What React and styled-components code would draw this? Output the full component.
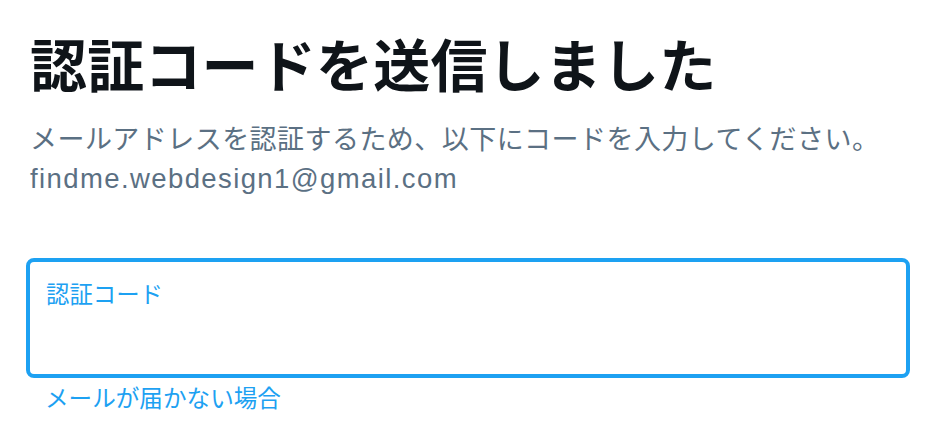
import React from "react";
import styled, { createGlobalStyle } from "styled-components";

const GlobalStyle = createGlobalStyle`
  html, body {
    margin: 0;
    padding: 0;
    background: #ffffff;
  }
  body {
    font-family: "Liberation Sans", "Noto Sans CJK JP", sans-serif;
    -webkit-font-smoothing: antialiased;
  }
`;

const Page = styled.div`
  width: 943px;
  height: 439px;
  box-sizing: border-box;
  padding: 28px 33px 0 26px;
  overflow: hidden;
`;

const Header = styled.div`
  padding: 0 4px;
`;

const Title = styled.h1`
  margin: 0;
  font-family: "Noto Sans CJK JP", sans-serif;
  font-size: 57px;
  font-weight: 700;
  line-height: 68px;
  color: #0f1419;
  letter-spacing: 0.2px;
`;

const Description = styled.p`
  margin: 22px 0 0;
  font-family: "Noto Sans CJK JP", sans-serif;
  font-size: 27px;
  line-height: 39px;
  letter-spacing: 0.45px;
  color: #5b7083;
`;

const Email = styled.span`
  display: block;
  padding-top: 2px;
  font-family: "Liberation Sans", sans-serif;
  font-size: 27.5px;
  letter-spacing: 1.4px;
`;

const Field = styled.label`
  display: block;
  margin-top: 60px;
  height: 120px;
  box-sizing: border-box;
  border: 4px solid #1da1f2;
  border-radius: 8px;
  padding: 17px 17px 0 16px;
`;

const FieldLabel = styled.span`
  display: block;
  font-family: "Noto Sans CJK JP", sans-serif;
  font-size: 23.4px;
  line-height: 28px;
  color: #1da1f2;
`;

const Input = styled.input`
  display: block;
  width: 100%;
  border: none;
  outline: none;
  background: transparent;
  padding: 0;
  margin-top: 8px;
  font-family: "Liberation Sans", "Noto Sans CJK JP", sans-serif;
  font-size: 30px;
  color: #0f1419;
`;

const HelpLink = styled.a`
  display: inline-block;
  margin: 5px 0 0 19px;
  font-family: "Noto Sans CJK JP", sans-serif;
  font-size: 23.6px;
  line-height: 28px;
  color: #1da1f2;
  text-decoration: none;
  cursor: pointer;
`;

export default function App() {
  return (
    <>
      <GlobalStyle />
      <Page>
        <Header>
          <Title>認証コードを送信しました</Title>
          <Description>
            メールアドレスを認証するため、以下にコードを入力してください。
            <Email>findme.webdesign1@gmail.com</Email>
          </Description>
        </Header>
        <Field>
          <FieldLabel>認証コード</FieldLabel>
          <Input type="text" />
        </Field>
        <HelpLink>メールが届かない場合</HelpLink>
      </Page>
    </>
  );
}
